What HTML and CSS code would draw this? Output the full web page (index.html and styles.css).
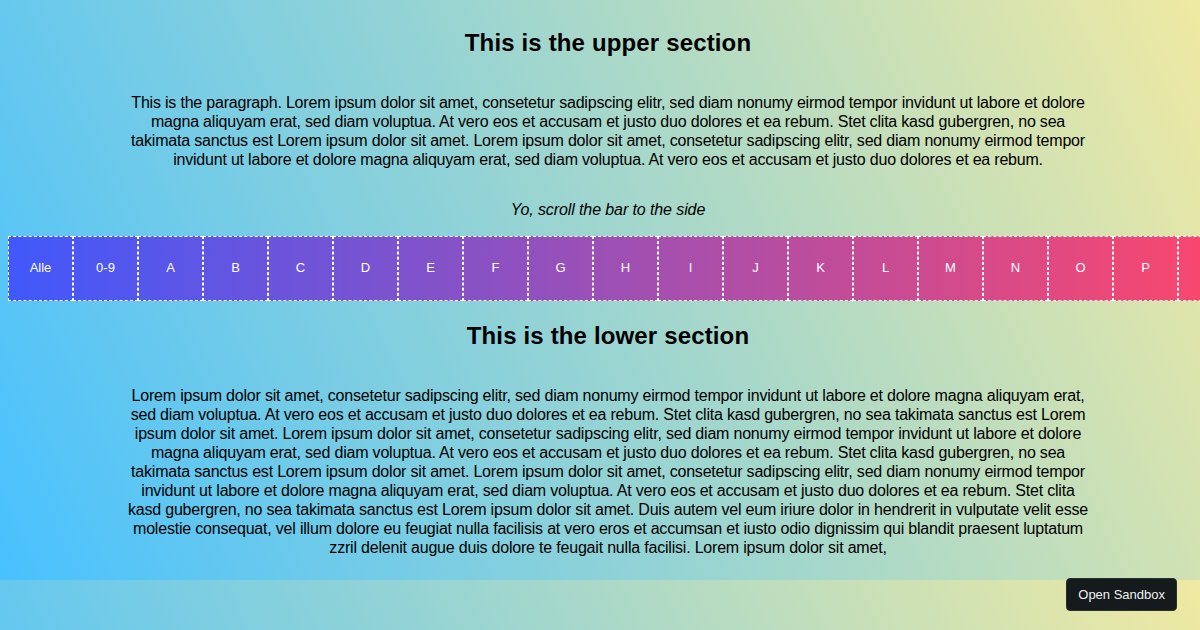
FILE: index.html
```html
<!DOCTYPE html>
<html>
<head>
<meta charset="utf-8">
<title>Scroll bar</title>
<link rel="stylesheet" href="styles.css">
</head>
<body>

<h2 class="title">This is the upper section</h2>
<p class="text">This is the paragraph. Lorem ipsum dolor sit amet, consetetur sadipscing elitr, sed diam nonumy eirmod tempor invidunt ut labore et dolore magna aliquyam erat, sed diam voluptua. At vero eos et accusam et justo duo dolores et ea rebum. Stet clita kasd gubergren, no sea takimata sanctus est Lorem ipsum dolor sit amet. Lorem ipsum dolor sit amet, consetetur sadipscing elitr, sed diam nonumy eirmod tempor invidunt ut labore et dolore magna aliquyam erat, sed diam voluptua. At vero eos et accusam et justo duo dolores et ea rebum.</p>

<p class="hint">Yo, scroll the bar to the side</p>

<!-- the letter bar -->
<div class="bar">
  <span class="tile">Alle</span>
  <span class="tile">0-9</span>
  <span class="tile">A</span>
  <span class="tile">B</span>
  <span class="tile">C</span>
  <span class="tile">D</span>
  <span class="tile">E</span>
  <span class="tile">F</span>
  <span class="tile">G</span>
  <span class="tile">H</span>
  <span class="tile">I</span>
  <span class="tile">J</span>
  <span class="tile">K</span>
  <span class="tile">L</span>
  <span class="tile">M</span>
  <span class="tile">N</span>
  <span class="tile">O</span>
  <span class="tile">P</span>
  <span class="tile">Q</span>
  <span class="tile">R</span>
  <span class="tile">S</span>
  <span class="tile">T</span>
  <span class="tile">U</span>
  <span class="tile">V</span>
  <span class="tile">W</span>
  <span class="tile">X</span>
  <span class="tile">Y</span>
  <span class="tile">Z</span>
</div>

<h2 class="title">This is the lower section</h2>
<p class="text">Lorem ipsum dolor sit amet, consetetur sadipscing elitr, sed diam nonumy eirmod tempor invidunt ut labore et dolore magna aliquyam erat, sed diam voluptua. At vero eos et accusam et justo duo dolores et ea rebum. Stet clita kasd gubergren, no sea takimata sanctus est Lorem ipsum dolor sit amet. Lorem ipsum dolor sit amet, consetetur sadipscing elitr, sed diam nonumy eirmod tempor invidunt ut labore et dolore magna aliquyam erat, sed diam voluptua. At vero eos et accusam et justo duo dolores et ea rebum. Stet clita kasd gubergren, no sea takimata sanctus est Lorem ipsum dolor sit amet. Lorem ipsum dolor sit amet, consetetur sadipscing elitr, sed diam nonumy eirmod tempor invidunt ut labore et dolore magna aliquyam erat, sed diam voluptua. At vero eos et accusam et justo duo dolores et ea rebum. Stet clita kasd gubergren, no sea takimata sanctus est Lorem ipsum dolor sit amet. Duis autem vel eum iriure dolor in hendrerit in vulputate velit esse molestie consequat, vel illum dolore eu feugiat nulla facilisis at vero eros et accumsan et iusto odio dignissim qui blandit praesent luptatum zzril delenit augue duis dolore te feugait nulla facilisi. Lorem ipsum dolor sit amet,</p>

<a class="sandbox" href="#">Open Sandbox</a>

</body>
</html>
```

FILE: styles.css
```css
html {
  overflow-x: hidden;
}

body {
  width: 100vw;
  margin: 8px;
  font-family: "Liberation Sans", Arial, sans-serif;
  color: #000;
  background: linear-gradient(65deg, #48c1ff, #efe9a2);
}

.title {
  font-size: 24px;
  font-weight: bold;
  text-align: center;
  margin: 20px 0;
  line-height: 30px;
  letter-spacing: 0.15px;
}

.text {
  max-width: 964px;
  margin: 35px auto 15px;
  font-size: 16px;
  line-height: 19px;
  letter-spacing: -0.2px;
  text-align: center;
}

.hint {
  margin: 31px 0 17px;
  font-size: 16px;
  line-height: 19px;
  letter-spacing: -0.1px;
  font-style: italic;
  text-align: center;
}

.bar {
  display: flex;
  overflow-x: auto;
  scrollbar-width: none;
  background: linear-gradient(to right, #4158fb, #f9476e);
}

.bar::-webkit-scrollbar { display: none; }

.tile {
  flex: 0 0 63px;
  height: 63px;
  border: 1px dashed #fff;
  display: flex;
  align-items: center;
  justify-content: center;
  padding-bottom: 2px;
  box-sizing: content-box;
  height: 61px;
  color: #fff;
  font-size: 13px;
}

.sandbox {
  position: fixed;
  right: 23px;
  bottom: 19px;
  display: flex;
  align-items: center;
  padding: 0 11px;
  height: 33px;
  box-sizing: border-box;
  background: #151a1c;
  border: 1px solid #2a2f31;
  border-radius: 4px;
  color: #f0f0f0;
  font: 13px "Liberation Sans", sans-serif;
  text-decoration: none;
}
```
